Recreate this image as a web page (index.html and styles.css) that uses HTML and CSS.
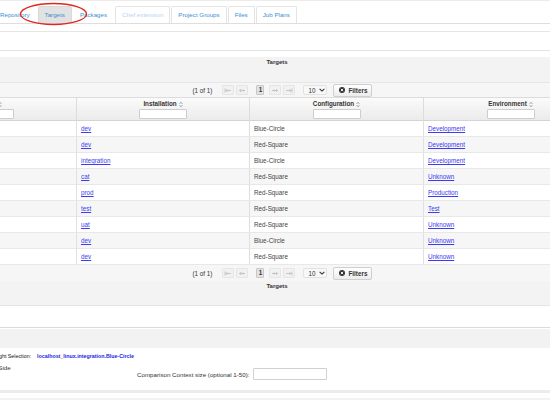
FILE: index.html
```html
<!DOCTYPE html>
<html>
<head>
<meta charset="utf-8">
<title>Targets</title>
<link rel="stylesheet" href="styles.css">
</head>
<body>
<div class="topline"></div>
<nav class="tabs">
  <a class="tab plain">Repository</a>
  <a class="tab active">Targets</a>
  <a class="tab plain">Packages</a>
  <a class="tab disabled">Chef extension</a>
  <a class="tab">Project Groups</a>
  <a class="tab">Files</a>
  <a class="tab">Job Plans</a>
</nav>
<svg class="annot" width="100" height="30" viewBox="0 0 100 30"><ellipse cx="53.5" cy="14" rx="33" ry="10.5" fill="none" stroke="#e0261f" stroke-width="1.3"/></svg>
<div class="gap1"></div>
<div class="gap2"></div>
<div class="gap3"></div>

<section class="panel">
  <div class="ptitle">Targets</div>
  <div class="pager">
    <span class="pcount">(1 of 1)</span>
    <span class="pbtn"><svg width="8" height="5" viewBox="0 0 8 5"><path d="M1 0.5v4M7 2.5H2M3.5 1L2 2.5 3.5 4" /></svg></span>
    <span class="pbtn"><svg width="8" height="5" viewBox="0 0 8 5"><path d="M7 2.5H1.5M3 1L1.5 2.5 3 4M5 1.5v2" /></svg></span>
    <span class="ppage">1</span>
    <span class="pbtn"><svg width="8" height="5" viewBox="0 0 8 5"><path d="M1 2.5h5.5M5 1l1.5 1.5L5 4M3 1.5v2" /></svg></span>
    <span class="pbtn"><svg width="8" height="5" viewBox="0 0 8 5"><path d="M7 0.5v4M1 2.5h5M4.5 1L6 2.5 4.5 4" /></svg></span>
    <span class="psel">10 <svg width="6" height="4" viewBox="0 0 6 4"><path d="M0.6 0.8L3 3.1 5.4 0.8"/></svg></span>
    <span class="fbtn"><svg width="6" height="6" viewBox="0 0 6 6"><circle cx="3" cy="3" r="3"/><path d="M1.8 1.8l2.4 2.4M4.2 1.8L1.8 4.2"/></svg>Filters</span>
  </div>
  <table class="grid">
    <colgroup><col class="c1"><col class="c2"><col class="c3"><col class="c4"><col class="c5"></colgroup>
    <thead>
      <tr>
        <th><div class="hl"><span class="hcut">Server</span> <svg class="sort" width="4" height="7" viewBox="0 0 4 7"><path d="M0.5 3L2 1.2 3.5 3M0.5 4L2 5.8 3.5 4"/></svg></div><input class="filt" type="text"></th>
        <th><div class="hl">Installation <svg class="sort" width="4" height="7" viewBox="0 0 4 7"><path d="M0.5 3L2 1.2 3.5 3M0.5 4L2 5.8 3.5 4"/></svg></div><input class="filt" type="text"></th>
        <th><div class="hl">Configuration <svg class="sort" width="4" height="7" viewBox="0 0 4 7"><path d="M0.5 3L2 1.2 3.5 3M0.5 4L2 5.8 3.5 4"/></svg></div><input class="filt" type="text"></th>
        <th><div class="hl">Environment <svg class="sort" width="4" height="7" viewBox="0 0 4 7"><path d="M0.5 3L2 1.2 3.5 3M0.5 4L2 5.8 3.5 4"/></svg></div><input class="filt" type="text"></th>
        <th></th>
      </tr>
    </thead>
    <tbody>
      <tr><td></td><td><a>dev</a></td><td>Blue-Circle</td><td><a>Development</a></td><td></td></tr>
      <tr><td></td><td><a>dev</a></td><td>Red-Square</td><td><a>Development</a></td><td></td></tr>
      <tr><td></td><td><a>integration</a></td><td>Blue-Circle</td><td><a>Development</a></td><td></td></tr>
      <tr><td></td><td><a>cat</a></td><td>Red-Square</td><td><a>Unknown</a></td><td></td></tr>
      <tr><td></td><td><a>prod</a></td><td>Red-Square</td><td><a>Production</a></td><td></td></tr>
      <tr><td></td><td><a>test</a></td><td>Red-Square</td><td><a>Test</a></td><td></td></tr>
      <tr><td></td><td><a>uat</a></td><td>Red-Square</td><td><a>Unknown</a></td><td></td></tr>
      <tr><td></td><td><a>dev</a></td><td>Blue-Circle</td><td><a>Unknown</a></td><td></td></tr>
      <tr><td></td><td><a>dev</a></td><td>Red-Square</td><td><a>Unknown</a></td><td></td></tr>
    </tbody>
  </table>
  <div class="pager bottom">
    <span class="pcount">(1 of 1)</span>
    <span class="pbtn"><svg width="8" height="5" viewBox="0 0 8 5"><path d="M1 0.5v4M7 2.5H2M3.5 1L2 2.5 3.5 4" /></svg></span>
    <span class="pbtn"><svg width="8" height="5" viewBox="0 0 8 5"><path d="M7 2.5H1.5M3 1L1.5 2.5 3 4M5 1.5v2" /></svg></span>
    <span class="ppage">1</span>
    <span class="pbtn"><svg width="8" height="5" viewBox="0 0 8 5"><path d="M1 2.5h5.5M5 1l1.5 1.5L5 4M3 1.5v2" /></svg></span>
    <span class="pbtn"><svg width="8" height="5" viewBox="0 0 8 5"><path d="M7 0.5v4M1 2.5h5M4.5 1L6 2.5 4.5 4" /></svg></span>
    <span class="psel">10 <svg width="6" height="4" viewBox="0 0 6 4"><path d="M0.6 0.8L3 3.1 5.4 0.8"/></svg></span>
    <span class="fbtn"><svg width="6" height="6" viewBox="0 0 6 6"><circle cx="3" cy="3" r="3"/><path d="M1.8 1.8l2.4 2.4M4.2 1.8L1.8 4.2"/></svg>Filters</span>
  </div>
  <div class="pfoot">Targets</div>
</section>

<div class="blank"></div>
<div class="shead"></div>
<section class="compare">
  <div class="selrow"><span class="sellabel">Right Selection:</span><a class="sellink">localhost_linux.integration.Blue-Circle</a></div>
  <div class="optrow">
    <div class="mode">Side by Side</div>
    <div class="ctx"><label>Comparison Context size (optional 1-50):</label><input class="ctxin" type="text"></div>
  </div>
</section>
<div class="line3"></div>
<div class="gap5"></div>
<div class="foot"></div>
</body>
</html>
```

FILE: styles.css
```css
html, body {
  margin: 0;
  padding: 0;
  background: #fff;
  overflow: hidden;
}
body {
  position: relative;
  width: 550px;
  height: 400px;
  font-family: "Liberation Sans", Arial, Helvetica, sans-serif;
  font-size: 6.3px;
  color: #333;
}
.topline { height: 1px; background: #ececec; }

.tabs {
  display: flex;
  gap: 1px;
  margin-left: -7px;
  padding-top: 5px;
  height: 17px;
  border-bottom: 1px solid #dedede;
}
.tab {
  display: block;
  height: 16px;
  line-height: 16px;
  padding: 0 6px;
  border: 1px solid #e4e4e4;
  border-bottom: none;
  border-radius: 2px 2px 0 0;
  color: #3a8fd3;
  font-size: 6.2px;
  text-decoration: none;
}
.tab.plain { border-color: transparent; }
.tab.active { background: #e2e2e2; border-color: #dadada; }
.tab.disabled { color: #b3d5ef; }

.annot { position: absolute; left: 0; top: 0; }

.gap1 { height: 7px; border-bottom: 1px solid #e6e6e6; }
.gap2 { height: 18px; border-bottom: 1px solid #e2e2e2; }
.gap3 { height: 6px; }

.panel { margin-left: -97px; width: 748px; }
.ptitle, .pfoot {
  box-sizing: border-box;
  height: 25px;
  padding-top: 1px;
  background: #f3f3f3;
  text-align: center;
  font-weight: bold;
  font-size: 6px;
  line-height: 9px;
  color: #333;
}
.pfoot { height: 24px; }

.pager {
  box-sizing: border-box;
  height: 15px;
  border-top: 1px solid #e6e6e6;
  background: #f6f6f6;
  display: flex;
  align-items: center;
  justify-content: center;
  padding-left: 11px;
}
.pager.bottom { height: 16px; border-top: none; }
.pcount { margin-right: 10px; color: #333; }
.pbtn {
  box-sizing: border-box;
  width: 12px;
  height: 10px;
  margin-right: 2px;
  background: #f1f1f1;
  border: 1px solid #e6e6e6;
  border-radius: 1px;
  display: flex;
  align-items: center;
  justify-content: center;
}
.pbtn svg path { stroke: #bdbdbd; stroke-width: 0.8; fill: none; }
.pbtn:nth-of-type(3) { margin-right: 8px; }
.ppage {
  box-sizing: border-box;
  width: 8px;
  height: 10px;
  margin-right: 5px;
  border: 1px solid #c8c8c8;
  background: #e2e2e2;
  border-radius: 1px;
  font-weight: bold;
  line-height: 8px;
  text-align: center;
  color: #333;
}
.psel {
  box-sizing: border-box;
  width: 24px;
  height: 10px;
  margin-left: 6px;
  padding-left: 4px;
  border: 1px solid #e2e2e2;
  border-radius: 2px;
  background: #f8f8f8;
  display: flex;
  align-items: center;
  gap: 4px;
  color: #333;
}
.psel svg path { stroke: #333; stroke-width: 1.1; fill: none; }
.fbtn {
  box-sizing: border-box;
  width: 39px;
  height: 13px;
  margin-left: 6px;
  border: 1px solid #cfcfcf;
  border-radius: 2px;
  background: linear-gradient(#ffffff, #ececec);
  display: flex;
  align-items: center;
  justify-content: center;
  gap: 4px;
  font-weight: bold;
  color: #333;
}
.fbtn svg circle { fill: #333; }
.fbtn svg path { stroke: #fff; stroke-width: 0.9; }

.grid {
  width: 748px;
  table-layout: fixed;
  border-collapse: separate;
  border-spacing: 0;
}
.c1 { width: 174px; }
.c2 { width: 173px; }
.c3 { width: 174px; }
.c4 { width: 174px; }
.c5 { width: 53px; }
.grid th {
  padding: 2px 0 1px;
  vertical-align: top;
  border-top: 1px solid #dcdcdc;
  border-bottom: 1px solid #d4d4d4;
  border-right: 1px solid #dcdcdc;
  background: linear-gradient(#fbfbfb, #ebebeb);
  font-weight: bold;
  color: #333;
}
.hl { height: 8px; line-height: 8px; display: flex; justify-content: center; align-items: center; gap: 2px; }
.sort path { stroke: #888; stroke-width: 0.7; fill: none; }
.filt {
  display: block;
  box-sizing: border-box;
  width: 48px;
  height: 10px;
  margin: 1px auto 0;
  padding: 0;
  border: 1px solid #cdcdcd;
  border-radius: 1px;
  background: #fff;
}
.grid td {
  height: 15px;
  padding: 0 4px;
  line-height: 15px;
  border-bottom: 1px solid #e8e8e8;
  border-right: 1px solid #e0e0e0;
  color: #444;
  white-space: nowrap;
  overflow: hidden;
}
.grid tbody tr:nth-child(even) td { background: #f6f6f6; }
.grid a { color: #3b3bef; text-decoration: underline; }

.blank {
  height: 21px;
  border-top: 1px solid #e4e4e4;
  border-bottom: 1px solid #dadada;
}
.shead { height: 19px; margin-top: 1px; background: #f2f2f2; }

.compare { padding: 4px 0 10px; font-size: 6.2px; color: #333; }
.selrow { display: flex; gap: 6px; height: 8px; line-height: 8px; margin-left: -6px; font-size: 5.3px; }
.sellabel { color: #111; }
.sellink { color: #2424e0; font-weight: bold; }
.optrow { display: flex; margin-top: 4px; height: 16px; }
.mode { width: 161px; margin-left: -24px; line-height: 8px; height: 8px; }
.ctx { display: flex; align-items: center; gap: 4px; padding-top: 4px; height: 12px; }
.ctxin {
  box-sizing: border-box;
  width: 74px;
  height: 12px;
  padding: 0;
  border: 1px solid #d0d0d0;
  border-radius: 1px;
  background: #fff;
}
.line3 { height: 3px; background: #ececec; }
.gap5 { height: 5px; }
.foot { height: 10px; background: #f2f2f2; }
```
